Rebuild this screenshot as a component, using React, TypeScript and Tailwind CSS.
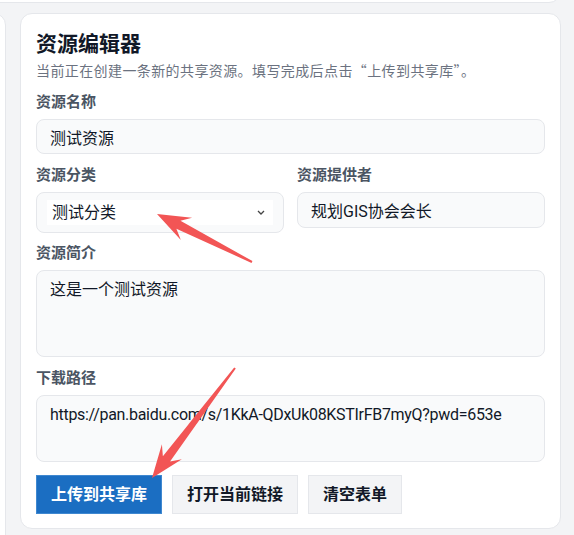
import React from 'react';

type Pt = [number, number];

// red annotation arrow drawn from tail to tip
const arrowPoints = (tail: Pt, tip: Pt) => {
  const dx = tip[0] - tail[0];
  const dy = tip[1] - tail[1];
  const len = Math.hypot(dx, dy);
  const ux = dx / len;
  const uy = dy / len;
  const at = (d: number, w: number) =>
    `${tail[0] + ux * d - uy * w},${tail[1] + uy * d + ux * w}`;
  return [
    at(0, 1),
    at(len - 24, 4.5),
    at(len - 33, 12.5),
    `${tip[0]},${tip[1]}`,
    at(len - 33, -12.5),
    at(len - 24, -4.5),
    at(0, -1),
  ].join(' ');
};

const Label = ({ children, className = '' }: { children: React.ReactNode; className?: string }) => (
  <div className={`text-[15px] leading-[20px] font-bold text-[#4b5563] ${className}`}>{children}</div>
);

const fieldCls =
  'block w-full rounded-lg border border-gray-200 bg-[#f9fafb] px-[13px] text-[16px] text-[#111827] outline-none';

const btnCls = 'h-[39px] border px-[14px] text-[16px] font-bold';

const App = () => {
  return (
    <div
      className="relative h-[535px] overflow-hidden bg-[#f3f4f6]"
      style={{ fontFamily: 'Roboto, "Noto Sans CJK SC", sans-serif' }}
    >
      <div className="-mt-[40px] -ml-[20px] mr-[13px] h-[43px] rounded-xl border border-gray-200 bg-white" />

      <div className="mt-[10px] flex items-start gap-[14px] pr-[13px]">
        <div className="-ml-[200px] h-[600px] w-[206px] shrink-0 rounded-xl border border-gray-200 bg-white" />

        <div className="flex-1 rounded-xl border border-gray-200 bg-white px-[15px] pt-[15px] pb-[14px]">
          <h1 className="text-[21px] leading-[30px] font-bold text-[#111827]">资源编辑器</h1>
          <p
            className="mt-px text-[14px] leading-[20px] tracking-[0.4px] text-[#6b7280]"
            style={{ fontFamily: '"Noto Sans CJK SC", sans-serif' }}
          >
            当前正在创建一条新的共享资源。填写完成后点击“上传到共享库”。
          </p>

          <Label className="mt-[12px]">资源名称</Label>
          <input readOnly defaultValue="测试资源" className={`${fieldCls} mt-[7px] h-[35px]`} />

          <div className="mt-[11px] grid grid-cols-2 items-start gap-x-[13px]">
            <div>
              <Label>资源分类</Label>
              <div className="mt-[7px] h-[41px] rounded-lg border border-gray-200 bg-[#f9fafb] px-[10px] py-[7px]">
                <div className="flex h-[25px] items-center justify-between bg-white pr-[8px] pl-[5px] text-[16px] text-[#111827]">
                  <span>测试分类</span>
                  <svg width="8" height="5" viewBox="0 0 8 5" fill="none">
                    <path d="M1 1l3 3 3-3" stroke="#444" strokeWidth="1.3" />
                  </svg>
                </div>
              </div>
            </div>
            <div>
              <Label>资源提供者</Label>
              <input
                readOnly
                defaultValue="规划GIS协会会长"
                className={`${fieldCls} mt-[7px] h-[36px]`}
              />
            </div>
          </div>

          <Label className="mt-[10px]">资源简介</Label>
          <textarea
            readOnly
            defaultValue="这是一个测试资源"
            className={`${fieldCls} mt-[7px] h-[87px] resize-none pt-[7px] leading-[24px]`}
          />

          <Label className="mt-[11px]">下载路径</Label>
          <textarea
            readOnly
            defaultValue="https://pan.baidu.com/s/1KkA-QDxUk08KSTIrFB7myQ?pwd=653e"
            className={`${fieldCls} mt-[7px] h-[67px] resize-none pt-[7px] leading-[24px] tracking-[-0.3px]`}
          />

          <div className="mt-[13px] flex gap-[10px]">
            <button className={`${btnCls} border-[#3f88d0] bg-[#1b6ec2] text-white`}>上传到共享库</button>
            <button className={`${btnCls} border-gray-200 bg-[#f3f4f6] text-[#111827]`}>打开当前链接</button>
            <button className={`${btnCls} border-gray-200 bg-[#f3f4f6] text-[#111827]`}>清空表单</button>
          </div>
        </div>
      </div>

      <svg className="pointer-events-none absolute inset-0" width="574" height="535">
        <polygon points={arrowPoints([252, 262], [157, 214])} fill="#f25555" />
        <polygon points={arrowPoints([235, 368], [152, 478])} fill="#f25555" />
      </svg>
    </div>
  );
};

export default App;
